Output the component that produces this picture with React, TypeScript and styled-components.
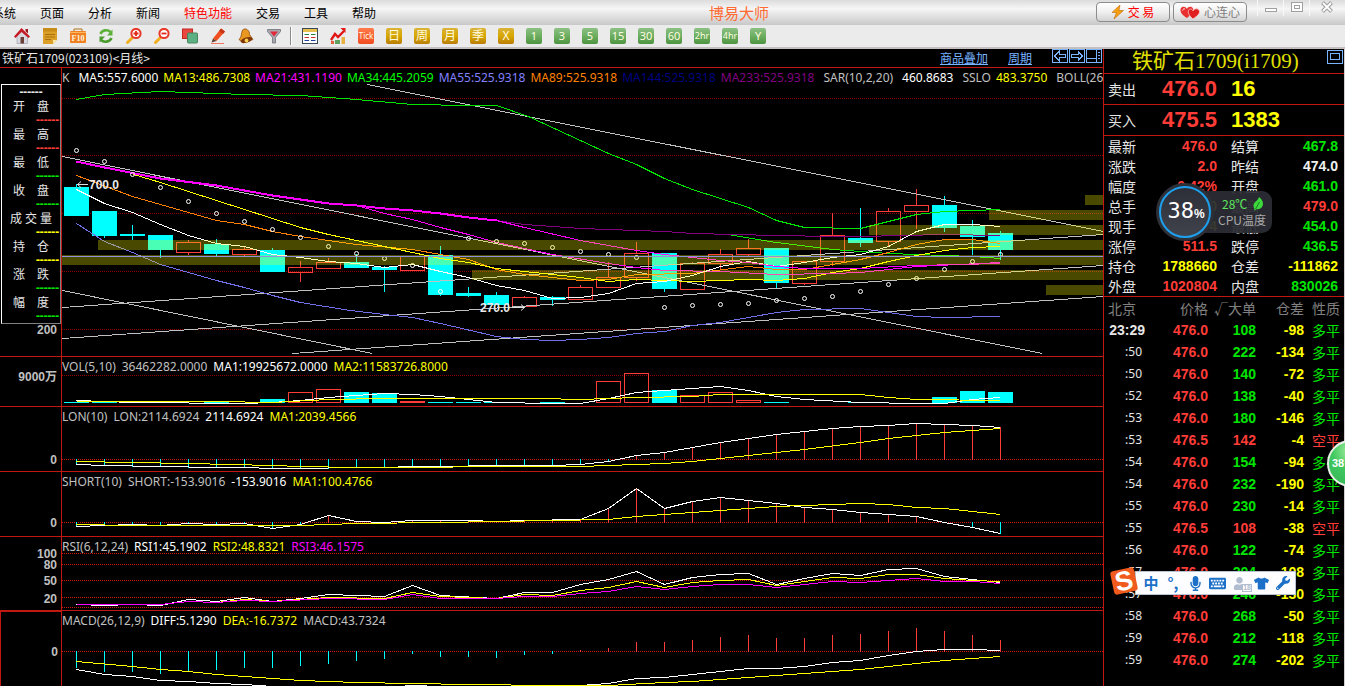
import React from "react";
import styled, { createGlobalStyle, css } from "styled-components";
import { FaKeyboard, FaMicrophone, FaTshirt, FaUser, FaWrench } from "react-icons/fa";

const RED = "#c01810";
const UP = "#ff3c38";
const DOWN = "#00ffff";
const GREEN = "#00e600";
const YELLOW = "#ffff00";
const SILVER = "#c0c0c0";
const LATIN = `"Noto Sans", "Noto Sans CJK SC", sans-serif`;
const CJK = `"Noto Sans CJK SC", sans-serif`;
const NUM = `"Liberation Sans", "Noto Sans CJK SC", sans-serif`;

const Global = createGlobalStyle`
  * { box-sizing: border-box; }
  body { margin: 0; background: #000; overflow: hidden; }
  button { font: inherit; color: inherit; border: 0; padding: 0; background: none; }
`;

const Shell = styled.div`
  position: relative;
  display: flex;
  flex-direction: column;
  min-height: 100vh;
  height: 100vh;
  overflow: hidden;
  background: #000;
  color: #e6e6e6;
  font: 12px/16px ${CJK};
`;

/* ---------- menu bar ---------- */
const MenuBar = styled.header`
  display: flex;
  flex: none;
  height: 25px;
  background: linear-gradient(#dcdcdc, #f6f6f6 35%, #e4e4e4 60%, #c8c8c8);
  color: #000;
`;
const Menu = styled.nav`
  display: flex;
  align-items: center;
  gap: 24px;
  margin-left: -8px;
  white-space: nowrap;
`;
const MenuItem = styled.button<{ $hot?: boolean }>`
  color: ${(p) => (p.$hot ? "#ff0000" : "#000")};
`;
const AppName = styled.h1`
  flex: 1;
  margin: 0;
  padding-left: 6px;
  text-align: center;
  font-size: 15px;
  line-height: 25px;
  font-weight: 400;
  color: #ff6a32;
`;
const PillRow = styled.div`
  display: flex;
  gap: 3px;
  padding-top: 2px;
`;
const Pill = styled.button<{ $color: string }>`
  display: flex;
  align-items: center;
  justify-content: center;
  gap: 4px;
  width: 74px;
  height: 20px;
  border: 1px solid #8c8c8c;
  border-radius: 4px;
  background: linear-gradient(#ffffff, #f0f0f0 50%, #d2d2d2);
  color: ${(p) => p.$color};
`;
const WindowButtons = styled.div`
  display: flex;
  width: 98px;
  padding-left: 10px;
`;
const WindowButton = styled.button<{ $wide?: boolean }>`
  display: flex;
  justify-content: center;
  width: ${(p) => (p.$wide ? 34 : 26)}px;
  height: 16px;
  border-left: 1px solid #f8f8f8;
`;

/* ---------- toolbar ---------- */
const ToolBar = styled.div`
  display: flex;
  flex: none;
  align-items: center;
  height: 24px;
  padding-left: 8px;
  border-bottom: 2px solid #c4c0c0;
  background: #ebebeb;
`;
const Tool = styled.button`
  display: flex;
  justify-content: center;
  width: 28px;
`;
const Divider = styled.span`
  width: 2px;
  height: 18px;
  margin: 0 4px 0 2px;
  background: #8a8a8a;
  border-right: 1px solid #fff;
`;
const tones = {
  gold: "linear-gradient(#d9b23c, #d8a800 50%, #b87c08)",
  green: "linear-gradient(#8cc084, #6cae60 50%, #4e9440)",
  red: "linear-gradient(#ff7a4c, #f04c20)",
};
const Tile = styled.span<{ $tone: keyof typeof tones; $size: number }>`
  display: block;
  width: 16px;
  height: 16px;
  border-radius: 2px;
  background: ${(p) => tones[p.$tone]};
  color: #fffbe0;
  font: ${(p) => p.$size}px/16px ${LATIN};
  text-align: center;
  overflow: hidden;
`;

/* ---------- body ---------- */
const Body = styled.div`
  display: flex;
  flex: 1;
  min-height: 0;
`;
const Charts = styled.main`
  display: flex;
  flex: 1;
  flex-direction: column;
  min-width: 0;
`;
const ChartTitle = styled.div`
  display: flex;
  flex: none;
  align-items: center;
  height: 19px;
  padding: 0 1px 0 2px;
  border-bottom: 1px solid ${RED};
`;
const Spacer = styled.span`
  flex: 1;
`;
const TitleLink = styled.a`
  margin-right: 20px;
  color: #78b4ff;
  text-decoration: underline;
`;
const FrameButtons = styled.div`
  display: flex;
  gap: 1px;
  color: #78b4ff;
`;

const Panel = styled.section<{ $height?: number }>`
  display: flex;
  ${(p) => (p.$height ? css`flex: none; height: ${p.$height}px; border-bottom: 1px solid ${RED};` : css`flex: 1; min-height: 0;`)}
`;
const Axis = styled.div<{ $active?: boolean }>`
  flex: none;
  width: 62px;
  border-right: 1px solid ${RED};
  ${(p) => p.$active && css`border-left: 1px solid ${RED}; border-top: 1px solid ${RED};`}
`;
const Plot = styled.div`
  display: grid;
  flex: 1;
  min-width: 0;
  overflow: hidden;
`;
const Canvas = styled.svg`
  grid-area: 1 / 1;
  display: block;
  width: 100%;
  height: 100%;
`;
const ScaleCanvas = styled.svg`
  display: block;
  width: 61px;
  height: 100%;
  font: bold 12px ${NUM};
`;
const Legend = styled.div<{ $gap: number }>`
  grid-area: 1 / 1;
  z-index: 1;
  display: flex;
  align-items: center;
  gap: ${(p) => p.$gap}px;
  height: 19px;
  font-family: ${LATIN};
  white-space: nowrap;
`;
const LegendItem = styled.span<{ $color: string; $lead?: number }>`
  margin-left: ${(p) => p.$lead ?? 0}px;
  color: ${(p) => p.$color};
`;

const DataBox = styled.div`
  width: 60px;
  height: 240px;
  margin: 16px 0 0 1px;
  border: 1px solid #fff;
  border-right-color: #808080;
  border-bottom-color: #808080;
`;
const DataHead = styled.div`
  height: 14px;
  font: bold 12px/14px ${LATIN};
  text-align: center;
`;
const DataLabel = styled.div<{ $wide?: boolean }>`
  width: ${(p) => (p.$wide ? 42 : 36)}px;
  margin-left: ${(p) => (p.$wide ? 8 : 11)}px;
  line-height: 14px;
  text-align-last: justify;
`;
const DataValue = styled.div<{ $color: string }>`
  padding-right: 1px;
  color: ${(p) => p.$color};
  font: bold 12px/14px ${LATIN};
  text-align: right;
`;
const AxisNote = styled.div`
  padding-right: 4px;
  color: ${SILVER};
  font: bold 12px/12px ${NUM};
  text-align: right;
`;

/* ---------- quote side ---------- */
const Side = styled.aside`
  flex: none;
  width: 242px;
  border-left: 1px solid ${RED};
  border-right: 1px solid #d4d0d0;
`;
const SideTitle = styled.h2`
  display: flex;
  height: 25px;
  margin: 0;
  padding: 0 1px 0 28px;
  border-bottom: 1px solid ${RED};
  color: #e0e000;
  font: 400 21px/24px "Liberation Serif", ${CJK};
  white-space: nowrap;
`;
const CornerButton = styled.button`
  display: flex;
  margin-left: auto;
  padding: 1px 0 0;
  color: #78b4ff;
`;
const BidRow = styled.div`
  display: flex;
  align-items: center;
  height: 31px;
  padding-left: 4px;
  padding-bottom: 1px;
  border-bottom: 1px solid ${RED};
  font-size: 14px;
`;
const BidPrice = styled.span`
  width: 69px;
  margin-left: 26px;
  color: ${UP};
  font: bold 22px/30px ${NUM};
`;
const BidVolume = styled.span`
  color: ${YELLOW};
  font: bold 22px/30px ${NUM};
`;
const Quotes = styled.table`
  width: 100%;
  table-layout: fixed;
  border-collapse: collapse;
  border-bottom: 1px solid ${RED};
  font-size: 14px;
  line-height: 20px;
`;
const QuoteLabel = styled.th<{ $second?: boolean }>`
  height: 20px;
  padding: 0 0 0 ${(p) => (p.$second ? 14 : 4)}px;
  text-align: left;
  font-weight: 400;
`;
const QuoteValue = styled.td<{ $color: string; $last?: boolean }>`
  padding: 0 ${(p) => (p.$last ? 6 : 0)}px 0 0;
  text-align: right;
  color: ${(p) => p.$color};
  font-family: ${NUM};
  font-weight: 700;
`;
const Trades = styled.table`
  width: 100%;
  table-layout: fixed;
  border-collapse: collapse;
  font-size: 14px;
  line-height: 22px;
`;
const TradeHead = styled.th<{ $left?: boolean }>`
  height: 22px;
  padding: 0 0 0 ${(p) => (p.$left ? 4 : 0)}px;
  text-align: ${(p) => (p.$left ? "left" : "right")};
  color: #808080;
  font-weight: 400;
  white-space: nowrap;
  &:last-child { padding-right: 4px; }
`;
const TradeTime = styled.td<{ $full?: boolean }>`
  height: 22px;
  padding: 0 ${(p) => (p.$full ? 0 : 3)}px 0 0;
  text-align: right;
  font: ${(p) => (p.$full ? `bold 14px/22px ${NUM}` : `12px/22px ${LATIN}`)};
`;
const TradeCell = styled.td<{ $color: string }>`
  padding: 0;
  text-align: right;
  color: ${(p) => p.$color};
  font-family: ${NUM};
  font-weight: 700;
`;
const TradeKind = styled.td<{ $color: string }>`
  padding: 0 4px 0 0;
  text-align: right;
  color: ${(p) => p.$color};
`;

/* ---------- floating desktop widgets ---------- */
const CpuWidget = styled.div`
  position: absolute;
  top: 183px;
  right: 73px;
  display: flex;
  align-items: center;
  width: 116px;
  height: 58px;
`;
const CpuDial = styled.div`
  z-index: 1;
  display: flex;
  flex: none;
  align-items: center;
  justify-content: center;
  width: 58px;
  height: 58px;
  border: 4px solid #2e3038;
  border-radius: 50%;
  background: #2e3038;
`;
const CpuRing = styled.div`
  display: flex;
  flex: none;
  align-items: baseline;
  justify-content: center;
  width: 52px;
  height: 52px;
  padding-left: 2px;
  border: 2px solid #1ea0ee;
  border-radius: 50%;
  background: linear-gradient(#2c2e38, #40424c);
  color: #fff;
  font: 22px/46px "DejaVu Sans Mono", monospace;
`;
const CpuUnit = styled.span`
  font: bold 12px ${NUM};
`;
const CpuInfo = styled.div`
  flex: 1;
  height: 42px;
  margin-left: -20px;
  padding: 5px 0 0 24px;
  border-radius: 0 10px 10px 0;
  background: rgba(44, 45, 52, 0.94);
  color: #a8a8a8;
  white-space: nowrap;
`;
const CpuTemp = styled.div`
  display: flex;
  align-items: center;
  gap: 6px;
  padding-left: 4px;
  color: #5ce65c;
`;
const Ball = styled.div`
  position: absolute;
  top: 440px;
  right: -29px;
  width: 47px;
  height: 47px;
  padding-left: 3px;
  border: 2px solid #e8f0e8;
  border-radius: 50%;
  background: radial-gradient(circle at 50% 20%, #a8f0a0, #40c860 45%, #34b454);
  color: #fff;
  font: bold 11px/43px ${NUM};
`;
const ImeBar = styled.div`
  position: absolute;
  top: 571px;
  right: 49px;
  display: flex;
  align-items: center;
  height: 24px;
  padding: 0 1px 0 4px;
  border: 1px solid #b8c4d4;
  background: #fdfdff;
  color: #1c70c8;
`;
const ImeButton = styled.button<{ $muted?: boolean }>`
  position: relative;
  display: flex;
  align-items: center;
  justify-content: center;
  width: 22px;
  color: ${(p) => (p.$muted ? "#b0bcd0" : "#1c70c8")};
  font: bold 15px/20px ${CJK};
`;
const ImeBadge = styled.span`
  position: absolute;
  right: -2px;
  bottom: -2px;
  border: 1px solid #b0bcd0;
  background: #fff;
  font: bold 7px/6px ${NUM};
`;
const ImeLogo = styled.svg`
  position: absolute;
  top: -6px;
  left: -27px;
`;

/* ---------- chart data ---------- */
type Pt = [number, number];
const STEP = 28;
const X0 = 76;
const LEFT = 62;
const cx = (i: number) => X0 + STEP * i;

// rising flag, high, body top, body bottom, low
const candles: [0 | 1, number, number, number, number][] = [
  [0, 184, 187, 216, 216], [0, 211, 211, 236, 238], [0, 225, 234, 236, 240], [0, 235, 235, 250, 258],
  [1, 240, 242, 252, 255], [0, 239, 244, 254, 256], [1, 247, 249, 254, 256], [0, 248, 250, 272, 272],
  [1, 261, 267, 272, 282], [1, 258, 262, 268, 269], [0, 254, 262, 268, 268], [0, 266, 267, 270, 292],
  [1, 256, 256, 270, 270], [0, 246, 255, 295, 296], [0, 287, 293, 296, 297], [0, 292, 295, 305, 305],
  [1, 296, 297, 306, 306], [0, 296, 297, 300, 306], [1, 285, 287, 299, 299], [1, 262, 277, 287, 287],
  [1, 242, 253, 277, 281], [0, 253, 253, 289, 292], [1, 262, 263, 289, 290], [1, 249, 254, 263, 269],
  [1, 239, 248, 254, 256], [0, 248, 248, 283, 289], [1, 261, 261, 283, 285], [1, 213, 235, 261, 266],
  [0, 208, 238, 243, 247], [1, 208, 211, 241, 247], [1, 189, 205, 211, 229], [0, 196, 205, 228, 232],
  [0, 220, 226, 237, 255], [0, 231, 233, 250, 260],
];
const sar = [150, 161, 174, 187, 201, 213, 221, 229, 237, 246, 253, 258, 265, 291, 238, 241, 243, 247, 251, 254, 257, 307, 305, 304, 303, 300, 298, 296, 291, 284, 278, 269, 261, 254];

const priceLines: { color: string; pts: Pt[] }[] = [
  { color: "#00e600", pts: [[76, 99], [104, 94], [160, 91], [244, 94], [300, 95], [356, 99], [412, 104], [468, 105], [496, 105], [528, 116], [608, 153], [636, 164], [664, 178], [692, 189], [720, 198], [748, 207], [776, 220], [804, 227], [860, 228], [916, 214], [944, 211], [1000, 209]] },
  { color: "#00e600", pts: [[727, 234], [776, 242], [832, 249], [888, 253], [972, 256], [1000, 258]] },
  { color: "#800080", pts: [[496, 220], [524, 224], [552, 226], [580, 228], [664, 231], [692, 233], [776, 235], [832, 236], [860, 236], [944, 234], [1000, 235]] },
  { color: "#7070e8", pts: [[76, 223], [104, 241], [132, 252], [160, 264], [216, 280], [244, 287], [272, 295], [300, 302], [350, 310], [384, 314], [412, 317], [440, 323], [496, 336], [524, 339], [552, 340], [580, 339], [608, 337], [636, 333], [664, 331], [692, 325], [720, 322], [776, 312], [804, 309], [860, 308], [888, 312], [916, 316], [944, 317], [1000, 316]] },
  { color: "#ff8000", pts: [[76, 175], [132, 196], [188, 212], [216, 220], [244, 224], [272, 231], [300, 236], [328, 240], [356, 244], [412, 249], [440, 254], [468, 259], [496, 269], [524, 274], [552, 277], [580, 280], [608, 279], [636, 274], [692, 273], [748, 266], [776, 269], [804, 269], [860, 259], [888, 252], [916, 244], [944, 239], [972, 239], [1000, 243]] },
  { color: "#ffff00", pts: [[133, 174], [160, 182], [216, 200], [272, 218], [300, 227], [328, 234], [356, 240], [384, 246], [412, 252], [440, 258], [468, 262], [496, 268], [552, 274], [580, 277], [608, 281], [636, 279], [692, 281], [748, 279], [776, 280], [804, 278], [832, 272], [860, 268], [888, 261], [916, 255], [944, 250], [972, 247], [1000, 246]] },
  { color: "#ff00ff", pts: [[356, 205], [384, 213], [412, 219], [440, 227], [468, 234], [496, 242], [524, 248], [552, 254], [608, 263], [636, 267], [664, 270], [720, 271], [776, 274], [832, 273], [860, 272], [916, 266], [1000, 262]] },
  { color: "#ffffff", pts: [[76, 189], [104, 203], [132, 212], [160, 224], [188, 235], [216, 243], [244, 246], [272, 254], [300, 257], [328, 261], [356, 263], [384, 267], [412, 264], [440, 271], [468, 277], [496, 285], [524, 290], [552, 298], [580, 297], [608, 293], [636, 283], [664, 281], [692, 275], [720, 266], [748, 261], [776, 266], [804, 262], [832, 257], [860, 254], [888, 246], [916, 231], [944, 224], [972, 224], [1000, 226]] },
];
const longMagenta: Pt[] = [[76, 161], [104, 167], [160, 178], [216, 185], [272, 195], [328, 203], [356, 205], [384, 208], [412, 210], [440, 213], [468, 217], [496, 220], [524, 227], [580, 240], [608, 245], [636, 250], [664, 254], [692, 257], [720, 260], [748, 262], [776, 266], [804, 268], [860, 268], [916, 265], [1000, 263]];
const trends: Pt[][] = [
  [[367, 84], [1103, 231]], [[62, 156], [1042, 353]], [[62, 290], [372, 353]],
  [[62, 307], [1103, 234]], [[62, 338], [1103, 265]], [[292, 353], [1103, 296]],
];
const bands: Pt[] = [[1085, 195], [989, 210], [869, 225], [98, 240], [62, 255], [472, 270], [1046, 285]];

const volTops: [0 | 1, number][] = [
  [0, 402], [0, 402], [0, 402], [0, 402], [1, 402], [0, 402], [1, 402], [0, 399], [1, 392], [1, 389], [0, 392], [0, 393],
  [1, 401], [0, 402], [0, 402], [0, 402], [1, 402], [0, 402], [1, 402], [1, 381], [1, 373], [0, 390], [1, 395], [1, 392],
  [1, 400], [0, 402], [1, 402], [1, 402], [0, 402], [1, 402], [1, 402], [0, 397], [0, 391], [0, 392],
];
const volLines: { color: string; pts: Pt[] }[] = [
  { color: "#fff", pts: [[76, 400], [132, 402], [244, 403], [272, 402], [300, 400], [328, 397], [356, 395], [384, 393], [412, 394], [440, 396], [468, 399], [496, 402], [552, 403], [580, 403], [608, 398], [636, 392], [664, 390], [720, 386], [748, 390], [776, 396], [804, 399], [860, 402], [916, 403], [944, 403], [972, 399], [1000, 397]] },
  { color: "#ff0", pts: [[76, 401], [216, 401], [272, 402], [328, 399], [384, 398], [540, 398], [580, 399], [636, 397], [692, 396], [720, 394], [860, 394], [888, 397], [916, 399], [1000, 400]] },
];
const lonWhite: Pt[] = [[76, 464], [104, 465], [160, 466], [216, 467], [300, 468], [356, 467], [440, 466], [496, 465], [552, 465], [580, 464], [608, 461], [636, 455], [664, 452], [692, 447], [720, 442], [748, 438], [776, 434], [804, 431], [832, 428], [860, 426], [888, 425], [916, 423], [944, 424], [972, 425], [1000, 427]];
const lonYellow: Pt[] = [[76, 461], [132, 462], [188, 463], [272, 465], [300, 466], [356, 467], [552, 466], [580, 466], [608, 465], [664, 463], [692, 461], [720, 458], [804, 449], [860, 442], [888, 438], [944, 432], [1000, 428]];
const shortWhite: Pt[] = [[76, 526], [104, 525], [132, 524], [160, 525], [188, 523], [216, 524], [244, 523], [272, 528], [300, 524], [328, 515], [356, 521], [384, 522], [412, 520], [468, 520], [496, 521], [524, 520], [580, 519], [608, 508], [636, 488], [664, 508], [692, 501], [720, 497], [748, 500], [776, 503], [804, 507], [832, 509], [860, 512], [888, 514], [916, 516], [944, 522], [972, 527], [1000, 533]];
const shortYellow: Pt[] = [[76, 524], [132, 525], [300, 525], [356, 523], [440, 522], [552, 520], [608, 519], [636, 516], [776, 506], [860, 503], [888, 504], [916, 507], [944, 508], [972, 511], [1000, 514]];
const rsiLines: { color: string; pts: Pt[] }[] = [
  { color: "#fff", pts: [[76, 604], [104, 605], [132, 604], [160, 605], [188, 599], [216, 601], [244, 597], [272, 601], [300, 598], [328, 594], [384, 596], [412, 585], [440, 595], [496, 598], [524, 592], [552, 592], [580, 584], [608, 579], [636, 571], [664, 584], [692, 577], [720, 574], [748, 573], [776, 584], [804, 578], [832, 573], [860, 575], [888, 569], [916, 568], [944, 576], [972, 579], [1000, 582]] },
  { color: "#ff0", pts: [[76, 604], [160, 604], [188, 601], [216, 602], [244, 599], [272, 601], [328, 597], [384, 598], [412, 592], [440, 596], [496, 598], [524, 594], [552, 595], [580, 590], [608, 587], [636, 581], [664, 587], [692, 582], [720, 580], [748, 579], [776, 585], [804, 581], [832, 577], [860, 578], [888, 574], [916, 574], [944, 578], [972, 580], [1000, 581]] },
  { color: "#f0f", pts: [[76, 604], [160, 604], [188, 601], [216, 602], [244, 600], [272, 601], [328, 598], [384, 599], [412, 594], [440, 598], [496, 598], [524, 596], [552, 596], [580, 593], [608, 591], [636, 586], [664, 589], [692, 586], [720, 584], [748, 584], [776, 587], [832, 581], [860, 582], [916, 578], [944, 581], [972, 581], [1000, 583]] },
];
const macdBars = [667, 671, 671, 673, 670, 669, 667, 667, 665, 663, 660, 658, 653, 656, 656, 657, 654, 653, 650, 648, 642, 642, 640, 637, 635, 638, 638, 635, 634, 631, 628, 631, 635, 640];
const macdLines: { color: string; pts: Pt[] }[] = [
  { color: "#fff", pts: [[76, 669], [104, 674], [132, 676], [160, 680], [188, 681], [216, 683], [244, 684], [272, 686], [300, 688], [384, 687], [412, 685], [440, 686], [468, 688], [552, 688], [580, 685], [608, 683], [636, 678], [664, 677], [748, 668], [776, 668], [804, 666], [832, 662], [860, 660], [888, 655], [916, 651], [944, 649], [972, 649], [1000, 650]] },
  { color: "#ff0", pts: [[76, 661], [132, 666], [160, 669], [188, 671], [216, 674], [300, 680], [356, 682], [412, 683], [468, 684], [552, 685], [608, 685], [664, 682], [692, 681], [748, 677], [804, 673], [860, 669], [916, 663], [944, 660], [1000, 656]] },
];

/* ---------- chart parts ---------- */
const Poly = ({ pts, color, width = 1 }: { pts: Pt[]; color: string; width?: number }) => (
  <polyline points={pts.map(([x, y]) => `${x + 0.5},${y + 0.5}`).join(" ")} fill="none" stroke={color} strokeWidth={width} />
);
const Dotted = ({ y, color }: { y: number; color: string }) => (
  <line x1={LEFT} x2={4000} y1={y + 0.5} y2={y + 0.5} stroke={color} strokeDasharray="1 1" />
);
const valueAt = (pts: Pt[], x: number) => {
  for (let i = 1; i < pts.length; i++) {
    if (x <= pts[i][0]) {
      const [ax, ay] = pts[i - 1];
      const [bx, by] = pts[i];
      return Math.round(ay + ((by - ay) * (x - ax)) / (bx - ax));
    }
  }
  return pts[pts.length - 1][1];
};
const Bars = ({ zero, ends }: { zero: number; ends: number[] }) => (
  <>
    {ends.map((y, i) => (
      <rect key={i} x={cx(i)} width={1} y={Math.min(y, zero)} height={Math.abs(y - zero) + 1} fill={y > zero ? DOWN : UP} />
    ))}
  </>
);
const Layer = ({ top, children }: { top: number; children: React.ReactNode }) => (
  <Canvas shapeRendering="crispEdges" aria-hidden="true">
    <g transform={`translate(${-LEFT} ${-top})`}>{children}</g>
  </Canvas>
);
const Scale = ({ top, marks }: { top: number; marks: [string, number][] }) => (
  <ScaleCanvas>
    {marks.map(([t, y]) => (
      <text key={t} x={57} y={y - top + 5} textAnchor="end" fill={SILVER}>{t}</text>
    ))}
  </ScaleCanvas>
);
const indices = candles.map((_, i) => i);

type Item = [string, string, number?];
const LegendRow = ({ items, gap = 6 }: { items: Item[]; gap?: number }) => (
  <Legend $gap={gap}>
    {items.map(([t, c, lead]) => (
      <LegendItem key={t} $color={c} $lead={lead}>{t}</LegendItem>
    ))}
  </Legend>
);

const boxRows: [string, string][] = [
  ["开 盘", UP], ["最 高", UP], ["最 低", GREEN], ["收 盘", GREEN],
  ["成 交 量", YELLOW], ["持 仓", YELLOW], ["涨 跌", GREEN], ["幅 度", GREEN],
];

const PricePanel = () => (
  <Panel $height={289}>
    <Axis>
      <DataBox>
        <DataHead>------</DataHead>
        {boxRows.map(([label, color]) => (
          <React.Fragment key={label}>
            <DataLabel $wide={label.length > 3}>{label}</DataLabel>
            <DataValue $color={color}>------</DataValue>
          </React.Fragment>
        ))}
      </DataBox>
      <AxisNote>200</AxisNote>
    </Axis>
    <Plot>
      <LegendRow gap={5} items={[
        ["K", SILVER], ["MA5:557.6000", "#fff", 4], ["MA13:486.7308", YELLOW], ["MA21:431.1190", "#ff00ff"],
        ["MA34:445.2059", "#00ff00"], ["MA55:525.9318", "#8080ff"], ["MA89:525.9318", "#ff8000"],
        ["MA144:525.9318", "#000080"], ["MA233:525.9318", "#800080"], ["SAR(10,2,20)", SILVER, 4], ["460.8683", "#fff", 4],
        ["SSLO", SILVER, 4], ["483.3750", YELLOW], ["BOLL(26,26,2)", SILVER, 4],
      ]} />
      <Layer top={68}>
        {[98, 155, 213, 271, 329].map((y) => <Dotted key={y} y={y} color="#900000" />)}
        {candles.map(([up, high, top, bottom, low], i) => (
          <g key={i}>
            <rect x={cx(i)} y={high} width={1} height={top - high} fill={up ? UP : DOWN} />
            <rect x={cx(i)} y={bottom} width={1} height={low - bottom} fill={up ? UP : DOWN} />
            {up ? (
              <rect x={cx(i) - 11.5} y={top + 0.5} width={24} height={bottom - top} fill="none" stroke={UP} />
            ) : (
              <rect x={cx(i) - 12} y={top} width={25} height={bottom - top} fill={DOWN} />
            )}
          </g>
        ))}
        {trends.map((t, i) => <Poly key={i} pts={t} color={SILVER} />)}
        {priceLines.map((l, i) => <Poly key={i} pts={l.pts} color={l.color} />)}
        <Poly pts={longMagenta.slice(0, 12)} color="#ff00ff" width={2} />
        <Poly pts={longMagenta.slice(11)} color="#ff00ff" />
        <g fill="none" stroke="#fff" shapeRendering="geometricPrecision">
          {sar.map((y, i) => <ellipse key={i} cx={cx(i) + 0.5} cy={y + 0.5} rx={2} ry={2} />)}
        </g>
        <g fill="#ffff00" fillOpacity={0.285}>
          {bands.map(([x, y]) => <rect key={y} x={x} y={y} width={1103 - x} height={10} />)}
        </g>
        <rect x={62} y={256} width={4000} height={1} fill="#9090e0" />
        <g stroke="#e0e0e0" fill="none" shapeRendering="geometricPrecision">
          <path d="M77 184.500H88M81 181.500l-3.500 3 3.500 3" />
          <path d="M512 307.500H525M521 304.500l3.500 3-3.500 3" />
        </g>
        <g fill="#e8e8e8" fontFamily="Liberation Sans, sans-serif" fontSize={12} fontWeight={700}>
          <text x={89} y={189}>700.0</text>
          <text x={480} y={312}>270.0</text>
        </g>
      </Layer>
    </Plot>
  </Panel>
);

const VolumePanel = () => (
  <Panel $height={50}>
    <Axis><Scale top={357} marks={[["9000万", 376]]} /></Axis>
    <Plot>
      <LegendRow items={[["VOL(5,10)", SILVER], ["36462282.0000", SILVER], ["MA1:19925672.0000", "#fff"], ["MA2:11583726.8000", YELLOW]]} />
      <Layer top={357}>
        <Dotted y={375} color="#900000" />
        {volTops.map(([up, y], i) => up
          ? <rect key={i} x={cx(i) - 11.5} y={y + 0.5} width={24} height={402 - y} fill="none" stroke={UP} />
          : <rect key={i} x={cx(i) - 12} y={y} width={25} height={403 - y} fill={DOWN} />)}
        {volLines.map((l) => <Poly key={l.color} pts={l.pts} color={l.color} />)}
      </Layer>
    </Plot>
  </Panel>
);

const LonPanel = () => (
  <Panel $height={65}>
    <Axis><Scale top={407} marks={[["0", 459]]} /></Axis>
    <Plot>
      <LegendRow items={[["LON(10)", SILVER], ["LON:2114.6924", SILVER], ["2114.6924", "#fff"], ["MA1:2039.4566", YELLOW]]} />
      <Layer top={407}>
        <Dotted y={459} color="#d01810" />
        <Bars zero={459} ends={indices.map((i) => valueAt(lonWhite, cx(i)))} />
        <Poly pts={lonWhite} color="#fff" />
        <Poly pts={lonYellow} color="#ff0" />
      </Layer>
    </Plot>
  </Panel>
);

const ShortPanel = () => (
  <Panel $height={65}>
    <Axis><Scale top={472} marks={[["0", 522]]} /></Axis>
    <Plot>
      <LegendRow items={[["SHORT(10)", SILVER], ["SHORT:-153.9016", SILVER], ["-153.9016", "#fff"], ["MA1:100.4766", YELLOW]]} />
      <Layer top={472}>
        <Dotted y={522} color="#d01810" />
        <Bars zero={522} ends={indices.map((i) => valueAt(shortWhite, cx(i)))} />
        <Poly pts={shortWhite} color="#fff" />
        <Poly pts={shortYellow} color="#ff0" />
      </Layer>
    </Plot>
  </Panel>
);

const RsiPanel = () => (
  <Panel $height={74}>
    <Axis><Scale top={537} marks={[["100", 553], ["80", 564], ["50", 580], ["20", 598]]} /></Axis>
    <Plot>
      <LegendRow items={[["RSI(6,12,24)", SILVER], ["RSI1:45.1902", "#fff"], ["RSI2:48.8321", YELLOW], ["RSI3:46.1575", "#ff00ff"]]} />
      <Layer top={537}>
        {[553, 564, 580, 597, 607].map((y) => <Dotted key={y} y={y} color="#d01810" />)}
        {rsiLines.map((l) => <Poly key={l.color} pts={l.pts} color={l.color} />)}
      </Layer>
    </Plot>
  </Panel>
);

const MacdPanel = () => (
  <Panel>
    <Axis $active><Scale top={612} marks={[["0", 651]]} /></Axis>
    <Plot>
      <LegendRow items={[["MACD(26,12,9)", SILVER], ["DIFF:5.1290", "#fff"], ["DEA:-16.7372", YELLOW], ["MACD:43.7324", SILVER]]} />
      <Layer top={611}>
        <Dotted y={651} color="#d01810" />
        <Bars zero={651} ends={macdBars} />
        {macdLines.map((l) => <Poly key={l.color} pts={l.pts} color={l.color} />)}
      </Layer>
    </Plot>
  </Panel>
);

/* ---------- toolbar icons ---------- */
const Icon = ({ children }: { children: React.ReactNode }) => (
  <svg width="16" height="16" viewBox="0 0 16 16" aria-hidden="true">{children}</svg>
);
const Magnifier = ({ plus }: { plus?: boolean }) => (
  <Icon>
    <path d="M1.500 14.500L6 10" stroke="#f0b020" strokeWidth="3" strokeLinecap="round" />
    <circle cx="10" cy="5.500" r="4.600" fill="#fff" stroke="#e83828" strokeWidth="2" />
    <path d={plus ? "M7.500 5.500h5M10 3v5" : "M7.500 5.500h5"} stroke="#e02818" strokeWidth="1.800" />
  </Icon>
);
const pictureTools: [string, React.ReactNode][] = [
  ["首页", <Icon><path d="M3 8v7.500h10.500V8L8 3z" fill="#d8d8e0" stroke="#889" strokeWidth=".5" /><path d="M0 8.500L7.500 0 16 8.500l-1.500 1.500L7.500 4 1.500 10z" fill="#c41c24" /><path d="M11.500 1H14v4.500l-2.500-2.200z" fill="#a01820" /><rect x="6.500" y="9" width="3.500" height="6.500" fill="#6a4038" /></Icon>],
  ["公告", <Icon><path d="M1 0h14v12l-4 4H1z" fill="#dca028" /><path d="M1 0h14v3.500H1z" fill="#c88c18" /><path d="M3 6.500h10M3 9h10M3 11.500h6" stroke="#a87010" /><path d="M15 12h-4v4z" fill="#fbe8a8" /></Icon>],
  ["F10", <Icon><path d="M4 3V1h8v2" fill="none" stroke="#b0701c" /><rect x="0" y="3" width="16" height="12" rx="1" fill="#f08020" /><path d="M0 4.500h16" stroke="#ffb860" /><text x="8" y="13" textAnchor="middle" fontSize="8" fontWeight="700" fontFamily="Liberation Serif, serif" fill="#fff6e0">F10</text></Icon>],
  ["刷新", <Icon><path d="M2.500 6C4 1.500 10 1.500 12.500 4" fill="none" stroke="#5cb038" strokeWidth="2.600" /><path d="M14.500 1.500v6H9z" fill="#5cb038" /><path d="M13.500 10c-2 4.500-8 4.500-10.500 2" fill="none" stroke="#4a9c2c" strokeWidth="2.600" /><path d="M1.500 14.500v-6H7z" fill="#4a9c2c" /></Icon>],
  ["放大", <Magnifier plus />],
  ["缩小", <Magnifier />],
  ["叠加", <Icon><rect x=".5" y="1" width="10" height="9.500" fill="#e84840" stroke="#c02820" /><rect x="5.500" y="5" width="10" height="10" rx="1" fill="#5cb084" stroke="#48845c" /></Icon>],
  ["画线", <Icon><path d="M3 10.500L11 .5l4 3L6.500 13z" fill="#f05020" /><path d="M11 .5l4 3-2 2.600-4-3z" fill="#c83418" /><path d="M3 10.500L6.500 13 1.500 14.500z" fill="#604030" /><path d="M1 15.500h13" stroke="#f07860" /></Icon>],
  ["预警", <Icon><path d="M4.500 2C8-1 12 3 11.500 6.500l3.500 5-10 3.500L1 11.500C4 9 3 5 4.500 2z" fill="#e89820" stroke="#90480c" strokeWidth=".8" /><ellipse cx="8.500" cy="12" rx="6" ry="2.600" transform="rotate(-18 8.500 12)" fill="#7c3408" /><circle cx="8.500" cy="12.500" r="1.900" fill="#f8d050" /></Icon>],
  ["筛选", <Icon><path d="M1.500 1.500h13v2L9.500 9.500V15h-3V9.500L1.500 3.500z" fill="#a8a8b0" stroke="#707078" strokeWidth=".8" /><path d="M4 3.500h8L8 8.500z" fill="#e02838" /></Icon>],
];
const chartTools: [string, React.ReactNode][] = [
  ["报价", <Icon><rect x=".5" y=".5" width="15" height="15" fill="#fff" stroke="#384858" /><rect x="1" y="1" width="14" height="3" fill="#e8c050" /><path d="M2.500 6.500h4.500M9 6.500h4.500" stroke="#208040" /><path d="M2.500 9.500h4.500M9 9.500h4.500" stroke="#d03030" /><path d="M2.500 12.500h4.500M9 12.500h4.500" stroke="#2040a0" /></Icon>],
  ["走势", <Icon><path d="M1 16v-3h3v3z" fill="#e0603c" /><path d="M5 16v-4h5v4z" fill="#60a060" /><path d="M11.500 16V9h3.500v7z" fill="#e8b040" /><path d="M1 12l4-6 3 3 6-6" fill="none" stroke="#e01818" strokeWidth="2.400" /><path d="M10.500 0h5v5z" fill="#e01818" /></Icon>],
];
const periodTiles: [string, keyof typeof tones, number][] = [
  ["Tick", "red", 8], ["日", "gold", 12], ["周", "gold", 12], ["月", "gold", 12], ["季", "gold", 12], ["X", "gold", 12],
  ["1", "green", 11], ["3", "green", 11], ["5", "green", 11], ["15", "green", 11], ["30", "green", 11], ["60", "green", 11],
  ["2hr", "green", 9], ["4hr", "green", 9], ["Y", "green", 11],
];

const FrameIcon = ({ children }: { children: React.ReactNode }) => (
  <svg width="16" height="15" viewBox="0 0 16 15" fill="none" stroke="currentColor" shapeRendering="crispEdges" aria-hidden="true">
    <rect x=".5" y=".5" width="15" height="13" />
    {children}
  </svg>
);

/* ---------- quote data ---------- */
const quotes: [string, string, string, string, string, string][] = [
  ["最新", "476.0", UP, "结算", "467.8", GREEN],
  ["涨跌", "2.0", UP, "昨结", "474.0", "#f0f0f0"],
  ["幅度", "0.42%", UP, "开盘", "461.0", GREEN],
  ["总手", "1850830", YELLOW, "最高", "479.0", UP],
  ["现手", "274", YELLOW, "最低", "454.0", GREEN],
  ["涨停", "511.5", UP, "跌停", "436.5", GREEN],
  ["持仓", "1788660", YELLOW, "仓差", "-111862", YELLOW],
  ["外盘", "1020804", UP, "内盘", "830026", GREEN],
];
const trades: [string, string, number, number, string][] = [
  ["23:29", "476.0", 108, -98, "多平"], [":50", "476.0", 222, -134, "多平"], [":50", "476.0", 140, -72, "多平"],
  [":52", "476.0", 138, -40, "多平"], [":53", "476.0", 180, -146, "多平"], [":53", "476.5", 142, -4, "空平"],
  [":54", "476.0", 154, -94, "多平"], [":54", "476.0", 232, -190, "多平"], [":55", "476.0", 230, -14, "多平"],
  [":55", "476.5", 108, -38, "空平"], [":56", "476.0", 122, -74, "多平"], [":57", "476.0", 204, -108, "多平"],
  [":57", "476.0", 246, -130, "多平"], [":58", "476.0", 268, -50, "多平"], [":59", "476.0", 212, -118, "多平"],
  [":59", "476.0", 274, -202, "多平"],
];

export default function App() {
  return (
    <Shell>
      <Global />
      <MenuBar>
        <Menu>
          {["系统", "页面", "分析", "新闻", "特色功能", "交易", "工具", "帮助"].map((m) => (
            <MenuItem key={m} $hot={m === "特色功能"}>{m}</MenuItem>
          ))}
        </Menu>
        <AppName>博易大师</AppName>
        <PillRow>
          <Pill $color="#ff0000">
            <svg width="12" height="14" viewBox="0 0 12 14" aria-hidden="true"><path d="M8 0L0 7.500h4.500L2 14l9.500-8.500H7z" fill="#f8a010" stroke="#c06808" strokeWidth=".6" /></svg>
            交 易
          </Pill>
          <Pill $color="#808080">
            <svg width="20" height="13" viewBox="0 0 20 13" aria-hidden="true">
              <path d="M7 12C0 8 0 4 0.800 2.500 2 0 5.500 0 7 3c1-3 5-3 6-.5S12 8 7 12z" fill="#e83030" />
              <path d="M13 13C8 9 8 6 8.500 4.500c1-2 3.500-2 4.500.5 1-2.500 4.500-3 6-.8S19 9 13 13z" fill="#e02020" stroke="#ffc8c8" strokeWidth=".8" />
              <path d="M2.500 4.500C3 3 4 2.500 5 3" stroke="#fff" fill="none" />
            </svg>
            心连心
          </Pill>
        </PillRow>
        <WindowButtons>
          <WindowButton aria-label="最小化"><svg width="12" height="14"><rect x=".5" y="8.500" width="11" height="3" fill="#fff" stroke="#a0a0a0" /></svg></WindowButton>
          <WindowButton aria-label="还原"><svg width="12" height="14" fill="#fff" stroke="#a0a0a0"><rect x=".5" y="2.500" width="11" height="9" /><rect x="3.500" y="5.500" width="5" height="3" /></svg></WindowButton>
          <WindowButton $wide aria-label="关闭"><svg width="12" height="14"><path d="M1.500 2.500l9 9M10.500 2.500l-9 9" stroke="#a0a0a0" strokeWidth="4" /><path d="M2 3l8 8M10 3l-8 8" stroke="#fff" strokeWidth="1.800" /></svg></WindowButton>
        </WindowButtons>
      </MenuBar>

      <ToolBar>
        {pictureTools.map(([n, icon]) => <Tool key={n} aria-label={n}>{icon}</Tool>)}
        <Divider />
        {chartTools.map(([n, icon]) => <Tool key={n} aria-label={n}>{icon}</Tool>)}
        {periodTiles.map(([t, tone, size]) => <Tool key={t}><Tile $tone={tone} $size={size}>{t}</Tile></Tool>)}
      </ToolBar>

      <Body>
        <Charts>
          <ChartTitle>
            铁矿石1709(023109)&lt;月线&gt;
            <Spacer />
            <TitleLink href="#overlay">商品叠加</TitleLink>
            <TitleLink href="#period">周期</TitleLink>
            <FrameButtons>
              <button aria-label="上一个"><FrameIcon><path d="M2.500 7L7 2.500v3h6.500v3H7v3z" /></FrameIcon></button>
              <button aria-label="下一个"><FrameIcon><path d="M13.500 7L9 2.500v3H2.500v3H9v3z" /></FrameIcon></button>
              <button aria-label="布局"><FrameIcon><path d="M10.500 0v14M0 9.500h10M12 3.500h2M12 6.500h2M12 9.500h2" /></FrameIcon></button>
            </FrameButtons>
          </ChartTitle>
          <PricePanel />
          <VolumePanel />
          <LonPanel />
          <ShortPanel />
          <RsiPanel />
          <MacdPanel />
        </Charts>

        <Side>
          <SideTitle>
            铁矿石1709(i1709)
            <CornerButton aria-label="最大化"><FrameIcon><rect x="3.500" y="3.500" width="9" height="6" /></FrameIcon></CornerButton>
          </SideTitle>
          <BidRow>卖出<BidPrice>476.0</BidPrice><BidVolume>16</BidVolume></BidRow>
          <BidRow>买入<BidPrice>475.5</BidPrice><BidVolume>1383</BidVolume></BidRow>
          <Quotes>
            <colgroup><col width="40" /><col width="73" /><col width="48" /><col /></colgroup>
            <tbody>
              {quotes.map(([a, av, ac, b, bv, bc]) => (
                <tr key={a}>
                  <QuoteLabel scope="row">{a}</QuoteLabel>
                  <QuoteValue $color={ac}>{av}</QuoteValue>
                  <QuoteLabel scope="row" $second>{b}</QuoteLabel>
                  <QuoteValue $color={bc} $last>{bv}</QuoteValue>
                </tr>
              ))}
            </tbody>
          </Quotes>
          <Trades>
            <colgroup><col width="41" /><col width="63" /><col width="48" /><col width="48" /><col /></colgroup>
            <thead>
              <tr>
                <TradeHead $left>北京</TradeHead><TradeHead>价格</TradeHead><TradeHead>√大单</TradeHead><TradeHead>仓差</TradeHead><TradeHead>性质</TradeHead>
              </tr>
            </thead>
            <tbody>
              {trades.map(([time, price, volume, diff, kind], i) => {
                const color = kind === "空平" ? UP : GREEN;
                return (
                  <tr key={i}>
                    <TradeTime $full={i === 0}>{time}</TradeTime>
                    <TradeCell $color={UP}>{price}</TradeCell>
                    <TradeCell $color={color}>{volume}</TradeCell>
                    <TradeCell $color={YELLOW}>{diff}</TradeCell>
                    <TradeKind $color={color}>{kind}</TradeKind>
                  </tr>
                );
              })}
            </tbody>
          </Trades>
        </Side>
      </Body>

      <CpuWidget>
        <CpuDial><CpuRing>38<CpuUnit>%</CpuUnit></CpuRing></CpuDial>
        <CpuInfo>
          <CpuTemp>
            28℃
            <svg width="10" height="14" viewBox="0 0 10 14" aria-hidden="true">
              <path d="M6 0c4 3 5 7 3 10-1.500 2-4 2.500-5.500 2L1.500 14C2 12 .5 11 .5 8.500.5 5 5 4 6 0z" fill="#3cd83c" />
              <path d="M2.500 12L6.500 5" stroke="#1c7c24" />
            </svg>
          </CpuTemp>
          CPU温度
        </CpuInfo>
      </CpuWidget>
      <Ball>38</Ball>
      <ImeBar>
        <ImeLogo width="30" height="30" viewBox="0 0 30 30" aria-hidden="true">
          <g transform="rotate(-12 15 15)">
            <rect x="3" y="3" width="24" height="24" rx="3" fill="#f05a1c" />
            <text x="15" y="24" textAnchor="middle" fontSize="27" fontWeight="700" fontFamily="Liberation Sans, sans-serif" fill="#fff">S</text>
          </g>
        </ImeLogo>
        <ImeButton>中</ImeButton>
        <ImeButton>°,</ImeButton>
        <ImeButton aria-label="语音"><FaMicrophone size={15} /></ImeButton>
        <ImeButton aria-label="键盘"><FaKeyboard size={17} /></ImeButton>
        <ImeButton aria-label="用户" $muted><FaUser size={13} /><ImeBadge>18</ImeBadge></ImeButton>
        <ImeButton aria-label="皮肤"><FaTshirt size={15} /></ImeButton>
        <ImeButton aria-label="工具箱"><FaWrench size={14} /></ImeButton>
      </ImeBar>
    </Shell>
  );
}
